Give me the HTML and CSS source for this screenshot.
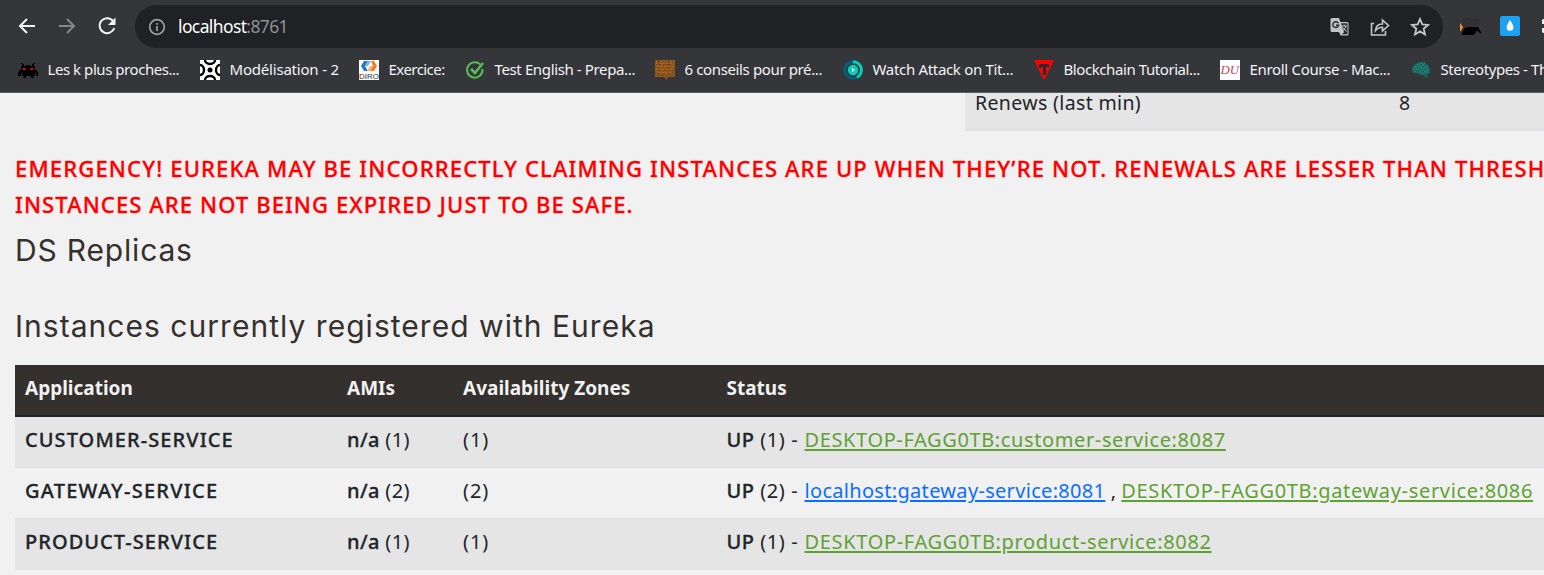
FILE: index.html
```html
<!DOCTYPE html>
<html lang="en">
<head>
<meta charset="utf-8">
<title>Eureka</title>
<link rel="stylesheet" href="styles.css">
</head>
<body>
<header class="chrome">
  <div class="toolbar">
    <svg class="nav" viewBox="0 0 20 20"><path d="M18 10H3M10 3L3 10l7 7"/></svg>
    <svg class="nav dim" viewBox="0 0 20 20"><path d="M2 10h15M10 3l7 7-7 7"/></svg>
    <svg class="nav" viewBox="0 0 20 20"><path d="M16.200 5.200A7.500 7.500 0 1 0 17.300 12"/><path class="solid" d="M18.500 1.500v7.500H11z"/></svg>
    <div class="omnibox">
      <svg class="info" viewBox="0 0 18 18"><circle cx="9" cy="9" r="7.300"/><path d="M9 8v5M9 5v1.800"/></svg>
      <span class="url">localhost<span class="port">:8761</span></span>
      <svg class="act translate" viewBox="0 0 20 20"><path class="fill" d="M2 1h7l1.500 4H17a1.500 1.500 0 0 1 1.500 1.500V17a1.500 1.500 0 0 1-1.500 1.500h-6.500L9 15H2A1.500 1.500 0 0 1 .5 13.500v-11A1.500 1.500 0 0 1 2 1z"/><path class="cut" d="M11 6.200h5.500a1 1 0 0 1 1 1v9a1 1 0 0 1-1 1H12l2-2-3-9z"/><path class="dark" d="M8.300 6.200A2.900 2.900 0 1 0 8.600 8.300H6"/><path class="thin" d="M11.500 9h5.500M14.200 7.500V9M16 9c-.5 2.500-2 4-3.300 5M12.800 10.500l3.700 4"/></svg>
      <svg class="act share" viewBox="0 0 20 20"><path d="M4 6.500H1.500v11.500h14V14M5.500 13.500c.3-4.500 3-6.500 7-6.500V3l6 5.500-6 5.500v-3.800c-3 0-5 .8-7 3.300z"/></svg>
      <svg class="act star" viewBox="0 0 20 20"><path d="M10 2l2.300 5.400 5.800.5-4.400 3.800 1.300 5.700-5-3-5 3 1.300-5.700L1.900 7.900l5.800-.5z"/></svg>
    </div>
    <svg class="ext cat" viewBox="0 0 22 20"><path fill="#32312f" d="M3 4l5-2 6 1 5-1 1 7-17 3z"/><path fill="#000" d="M4 12l5-1h9l3.500 6-1 .5-3.500-3L14 19H1.500z"/><path fill="#f0921e" d="M0 7l3 4-2 4H0z"/></svg>
    <svg class="ext drop" viewBox="0 0 20 20"><rect width="20" height="20" rx="2" fill="#1da1f2"/><path fill="#fff" d="M10 4c1.800 3 3.400 5 3.400 7.300a3.400 3.500 0 0 1-6.800 0C6.600 9 8.200 7 10 4z"/></svg>
    <svg class="ext more" viewBox="0 0 4 14"><path fill="#e8eaed" d="M1 0h3v5H0V1zM0 9h4v5H1l-1-1z"/></svg>
  </div>
  <nav class="bookmarks">
    <a class="bm b1"><svg viewBox="0 0 20 20"><path fill="#000" d="M3 3h2v1h1v2h2V5h4v1h2V4h1V3h2v1h-1v2h1v4h2v2h1v4h-2v-3h-1v3h-2v1h1v1h-3v-2H8v2H5v-1h1v-1H4v-3H3v3H0v-4h1v-2h2V6h1V4H3z"/><path fill="#f00" d="M5 8h2.500v2H5zM12.500 8H15v2h-2.500z"/></svg><span>Les k plus proches...</span></a>
    <a class="bm b2"><svg viewBox="0 0 20 20"><rect width="20" height="20" fill="#fff"/><g fill="none" stroke="#000" stroke-width="2.400"><path d="M5 0a5 4 0 0 0 10 0M5 20a5 4 0 0 1 10 0M0 5a4 5 0 0 1 0 10M20 5a4 5 0 0 0 0 10"/></g><circle cx="10" cy="10" r="2.500"/></svg><span>Modélisation - 2</span></a>
    <a class="bm b3"><svg viewBox="0 0 20 20"><rect width="20" height="20" fill="#fff"/><path fill="#2479c4" d="M5 1h4L6 6l3 5H5L2 6z"/><path fill="#77b5e2" d="M9 1h3L9 6H6z"/><path fill="#f47b20" d="M12 1h3l3 5-3 5h-4l3-5z"/><path fill="#f9b27a" d="M8 11l3-5h3l-3 5z"/><text x="0" y="19.300" class="diro" textLength="20" lengthAdjust="spacingAndGlyphs">DIRO</text></svg><span>Exercice:</span></a>
    <a class="bm b4"><svg viewBox="0 0 20 20"><g fill="none" stroke="#57bb5a" stroke-width="2"><path d="M15 4.300A7.700 7.700 0 1 0 17.400 9"/><path stroke-width="2.600" d="M6 9l4 4 8-10"/></g></svg><span>Test English - Prepa...</span></a>
    <a class="bm b5"><svg viewBox="0 0 20 20"><path fill="#9a5818" d="M0 0h20v17h-7l-2 3-1-3H0z"/><path fill="none" stroke="#5d4630" stroke-width="1" stroke-dasharray="1 2 2 3 1 1" d="M0 1.500h20M1 4.500h18M0 7.500h20M1 10.500h19M0 13.500h20M2 15.500h17M3.500 0v16M8.500 1v15M13.500 0v16M17.500 2v14"/><path stroke="#c87420" stroke-dasharray="1 3 1 2" d="M1 3.500h18M3 6.500h16M1 9.500h18M4 12.500h14"/></svg><span>6 conseils pour pré...</span></a>
    <a class="bm b6"><svg viewBox="0 0 20 20"><g fill="none" stroke-width="3"><circle cx="10" cy="10" r="8.300" stroke="#075c79"/><path stroke="#00d1b8" d="M10 1.700A8.300 8.300 0 0 1 14 17.300"/></g><circle cx="10" cy="10" r="5.200" fill="#08cdb8"/><path fill="#fff" d="M9 8l2.800 2L9 12z"/></svg><span>Watch Attack on Tit...</span></a>
    <a class="bm b7"><svg viewBox="0 0 20 20"><path fill="#f00" d="M0 0h20L10 20z"/><path fill="#292a2d" d="M5 4h10v3h-3v8h-3V7H7v1H5z"/></svg><span>Blockchain Tutorial...</span></a>
    <a class="bm b8"><svg viewBox="0 0 20 20"><rect width="20" height="20" fill="#fff"/><text x="0.500" y="14" class="du" textLength="18.500" lengthAdjust="spacingAndGlyphs">DU</text></svg><span>Enroll Course - Mac...</span></a>
    <a class="bm b9"><svg viewBox="0 0 20 20"><path fill="#19675e" d="M1 8l3-4 4-2 5 0 4 3 2 5v3l-3 2 1 3-3-1-2-2-3 0-3-2-4 0-1-2z"/><path fill="none" stroke="#28a28d" stroke-width=".8" stroke-dasharray="1.500 1" d="M3 6l10 8M6 4l11 9M10 3l8 7M2 10l8-7M4 12l10-9M8 13l9-8M11 14l7-5M2 9l4 4"/></svg><span>Stereotypes - Th</span></a>
  </nav>
</header>
<main class="page">
  <div class="renews"><span>Renews (last min)</span><span>8</span></div>
  <p class="warning"><span class="w1">EMERGENCY! EUREKA MAY BE INCORRECTLY CLAIMING INSTANCES ARE UP WHEN THEY’RE NOT. RENEWALS ARE LESSER THAN THRESH</span><br><span class="w2">INSTANCES ARE NOT BEING EXPIRED JUST TO BE SAFE.</span></p>
  <h1 class="title">DS Replicas</h1>
  <h1 class="title second">Instances currently registered with Eureka</h1>
  <div class="table">
    <div class="row head"><span>Application</span><span>AMIs</span><span class="az">Availability Zones</span><span>Status</span></div>
    <div class="row odd"><b class="n1">CUSTOMER-SERVICE</b><span class="ami"><b>n/a</b> (1)</span><span class="zone">(1)</span><span class="status"><span class="up"><b>UP</b> (1) -</span><a class="l1">DESKTOP-FAGG0TB:customer-service:8087</a></span></div>
    <div class="row"><b class="n2">GATEWAY-SERVICE</b><span class="ami"><b>n/a</b> (2)</span><span class="zone">(2)</span><span class="status"><span class="up"><b>UP</b> (2) -</span><a class="blue l2">localhost:gateway-service:8081</a><span class="comma">,</span><a class="l3">DESKTOP-FAGG0TB:gateway-service:8086</a></span></div>
    <div class="row odd"><b class="n3">PRODUCT-SERVICE</b><span class="ami"><b>n/a</b> (1)</span><span class="zone">(1)</span><span class="status"><span class="up"><b>UP</b> (1) -</span><a class="l4">DESKTOP-FAGG0TB:product-service:8082</a></span></div>
  </div>
</main>
</body>
</html>
```
FILE: styles.css
```css
* { box-sizing: border-box; }
body { margin: 0; height: 575px; overflow: hidden; background: #f1f1f1; color: #212529; font-family: "Noto Sans", sans-serif; }
.chrome { height: 93px; background: #35363a; border-bottom: 1px solid #5b5c60; color: #f1f3f4; }
.toolbar { display: flex; align-items: center; height: 52px; padding: 0 0 0 17px; overflow: hidden; }
.toolbar svg { flex: none; fill: none; }
.nav { width: 20px; height: 20px; margin-right: 20px; stroke: #f1f3f4; stroke-width: 2; }
.nav.dim { stroke: #86878a; }
.nav .solid { fill: #f1f3f4; stroke: none; }
.nav:nth-child(3) { margin-right: 18px; }
.omnibox { display: flex; align-items: center; width: 1308px; height: 43px; margin-top: 1px; padding-left: 13px; border-radius: 22px; background: #202124; flex: none; }
.info { width: 18px; height: 18px; stroke: #9aa0a6; stroke-width: 1.7; }
.url { width: 1152px; height: 26px; margin-left: 12px; font-size: 17.5px; line-height: 24px; letter-spacing: -.62px; color: #fff; }
.port { color: #8d9195; }
.act { width: 20px; height: 20px; margin-right: 20px; stroke: #c4c6c9; stroke-width: 1.6; }
.translate .fill { fill: #bfc1c4; stroke: none; }
.translate .cut { fill: #292a2d; stroke: none; }
.translate .dark { stroke: #292a2d; stroke-width: 1.4; }
.translate .thin { stroke-width: 1; }
.star { stroke-width: 1.8; margin-right: 0; }
.cat { width: 22px; height: 20px; margin-left: 17px; }
.drop { width: 20px; height: 20px; margin-left: 18px; }
.more { width: 4px; height: 14px; margin-left: 22px; }
.bookmarks { display: grid; grid-template-columns: 182px 159px 106px 190px 188px 191px 186px 191px 200px; height: 36px; padding-left: 18px; overflow: hidden; }
.bm { display: flex; align-items: center; gap: 9.500px; white-space: nowrap; font-size: 15px; line-height: 20px; letter-spacing: -.45px; }
.bm svg { width: 20px; height: 20px; flex: none; }
.bm span { height: 22px; }
.b2 { letter-spacing: -.2px; }
.b3 { letter-spacing: -.55px; }
.b4, .b5 { letter-spacing: -.37px; }
.b6, .b8 { letter-spacing: -.32px; }
.b7 { letter-spacing: -.42px; }
.b9 { letter-spacing: -.4px; }
.diro { font: 8px "Liberation Sans", sans-serif; letter-spacing: 0; fill: #333; }
.du { font: italic 12px "Liberation Serif", serif; letter-spacing: 0; fill: #c64450; }
.page { padding-left: 15px; }
.renews { display: grid; grid-template-columns: 424px 1fr; height: 38px; margin-left: 950px; padding-left: 10px; border-bottom: 1px solid #dee2e6; background: #e5e5e5; font-size: 19.5px; line-height: 20px; letter-spacing: .36px; }
.warning { margin: 19px 0 0; font-size: 22px; line-height: 36px; font-weight: 500; -webkit-text-stroke: .3px #f00; color: #f00; white-space: nowrap; }
.w1 { letter-spacing: 1.16px; }
.w2 { letter-spacing: 1.1px; }
.title { margin: 8px 0 0; font: 400 30px/40px Inter, sans-serif; letter-spacing: .82px; color: #34302d; white-space: nowrap; }
.title.second { margin-top: 36px; letter-spacing: 1.03px; }
.table { margin-top: 19px; font-size: 20px; line-height: 28px; white-space: nowrap; }
.row { display: grid; grid-template-columns: 322px 116px 263.5px 1fr; height: 51px; padding: 9px 0 0 10px; border-bottom: 1px solid #dee2e6; }
.row b { font-weight: 500; -webkit-text-stroke: .3px #212529; }
.row.odd { background: #e5e5e5; }
.row.head { height: 52px; border-bottom: 2px solid #212529; background: #34302d; color: #f1f1f1; font-size: 19px; font-weight: 700; }
.row .n1 { letter-spacing: 1.08px; }
.row .n2 { letter-spacing: 1.25px; }
.row .n3 { letter-spacing: 1.04px; }
.ami { letter-spacing: .35px; }
.zone { letter-spacing: .9px; }
.status { display: flex; }
.up { width: 78px; letter-spacing: .55px; }
.status a { color: #5fa134; text-decoration: underline; text-decoration-thickness: 2px; text-underline-offset: 2px; }
.status a.blue { color: #0d6efd; }
.l1 { letter-spacing: .62px; }
.l2 { letter-spacing: .31px; }
.l3 { letter-spacing: .66px; }
.l4 { letter-spacing: .67px; }
.comma { width: 16px; text-align: center; }
```
